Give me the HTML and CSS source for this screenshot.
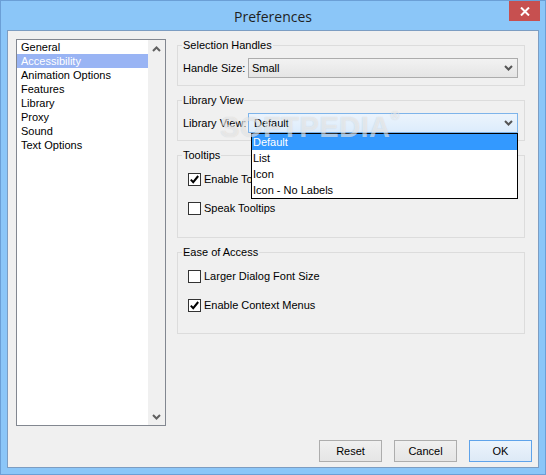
FILE: index.html
```html
<!DOCTYPE html>
<html>
<head>
<meta charset="utf-8">
<title>Preferences</title>
<link rel="stylesheet" href="styles.css">
</head>
<body>
<div class="window">
  <div class="titlebar">
    <span class="title">Preferences</span>
    <div class="close">
      <svg width="10" height="9" viewBox="0 0 10 9"><path d="M1 0.5 L9 8.5 M9 0.5 L1 8.5" stroke="#fff" stroke-width="2" fill="none"/></svg>
    </div>
  </div>
  <div class="client">
    <div class="main">
      <div class="listbox">
        <ul class="items">
          <li>General</li>
          <li class="sel">Accessibility</li>
          <li>Animation Options</li>
          <li>Features</li>
          <li>Library</li>
          <li>Proxy</li>
          <li>Sound</li>
          <li>Text Options</li>
        </ul>
        <div class="vscroll">
          <div class="sbtn">
            <svg width="9" height="6" viewBox="0 0 9 6"><path d="M1 5 L4.5 1.5 L8 5" stroke="#606060" stroke-width="2" fill="none"/></svg>
          </div>
          <div class="sbtn">
            <svg width="9" height="6" viewBox="0 0 9 6"><path d="M1 1 L4.5 4.5 L8 1" stroke="#606060" stroke-width="2" fill="none"/></svg>
          </div>
        </div>
      </div>
      <div class="panel">
        <fieldset class="group g1">
          <legend>Selection Handles</legend>
          <div class="field">
            <span class="lbl">Handle Size:</span>
            <div class="combo">
              <span>Small</span>
              <svg class="chev" width="9" height="6" viewBox="0 0 9 6"><path d="M1 1 L4.5 4.5 L8 1" stroke="#555" stroke-width="2" fill="none"/></svg>
            </div>
          </div>
        </fieldset>
        <fieldset class="group g2">
          <legend>Library View</legend>
          <div class="field">
            <span class="lbl">Library View:</span>
            <div class="combo focus">
              <span class="val">Default</span>
              <svg class="chev" width="9" height="6" viewBox="0 0 9 6"><path d="M1 1 L4.5 4.5 L8 1" stroke="#555" stroke-width="2" fill="none"/></svg>
              <ul class="dropdown">
                <li class="hl">Default</li>
                <li>List</li>
                <li>Icon</li>
                <li>Icon - No Labels</li>
              </ul>
            </div>
          </div>
        </fieldset>
        <fieldset class="group g3">
          <legend>Tooltips</legend>
          <div class="checks">
            <div class="check">
              <span class="box on"><svg width="11" height="11" viewBox="0 0 11 11"><path d="M1.8 5.6 L4.2 8.2 L9.2 2" stroke="#000" stroke-width="2" fill="none"/></svg></span>
              <span>Enable Tooltips</span>
            </div>
            <div class="check">
              <span class="box"></span>
              <span>Speak Tooltips</span>
            </div>
          </div>
        </fieldset>
        <fieldset class="group g4">
          <legend>Ease of Access</legend>
          <div class="checks">
            <div class="check">
              <span class="box"></span>
              <span>Larger Dialog Font Size</span>
            </div>
            <div class="check">
              <span class="box on"><svg width="11" height="11" viewBox="0 0 11 11"><path d="M1.8 5.6 L4.2 8.2 L9.2 2" stroke="#000" stroke-width="2" fill="none"/></svg></span>
              <span>Enable Context Menus</span>
            </div>
          </div>
        </fieldset>
      </div>
    </div>
    <div class="buttons">
      <div class="btn">Reset</div>
      <div class="btn">Cancel</div>
      <div class="btn default">OK</div>
    </div>
    <div class="watermark">SOFTPEDIA<sup>®</sup></div>
  </div>
</div>
</body>
</html>
```
FILE: styles.css
```css
* { box-sizing: border-box; }
html, body { margin: 0; padding: 0; }
body {
  width: 546px;
  height: 475px;
  overflow: hidden;
  font-family: "Liberation Sans", Arial, sans-serif;
  font-size: 11px;
  color: #000;
}
.window {
  width: 546px;
  height: 475px;
  background: #8bc6f8;
  border: 1px solid #6b9fd6;
  display: flex;
  flex-direction: column;
}
.titlebar {
  height: 29px;
  flex: none;
  display: flex;
  align-items: center;
  justify-content: center;
  position: relative;
}
.title {
  font-family: "Open Sans", "Noto Sans", sans-serif;
  font-size: 14px;
  color: #1f1f1f;
  margin-top: 2px;
}
.close {
  position: absolute;
  top: 0;
  right: 5px;
  width: 31px;
  height: 20px;
  background: #c75050;
  display: flex;
  align-items: center;
  justify-content: center;
}
.client {
  flex: 1;
  margin: 0 6px 6px 6px;
  background: #f0f0f0;
  border: 1px solid #7c9dc2;
  padding: 8px 6px 5px 8px;
  display: flex;
  flex-direction: column;
  gap: 14px;
  position: relative;
}
.main {
  display: flex;
  gap: 11px;
  height: 387px;
  flex: none;
}
.listbox {
  width: 150px;
  height: 387px;
  border: 1px solid #828790;
  background: #fff;
  display: flex;
}
.items {
  list-style: none;
  margin: 0;
  padding: 0;
  flex: 1;
}
.items li {
  height: 14px;
  line-height: 14px;
  padding-left: 4px;
  white-space: nowrap;
}
.items li.sel {
  background: #99b4f4;
  color: #fff;
}
.vscroll {
  width: 17px;
  background: #f0f0f0;
  display: flex;
  flex-direction: column;
  justify-content: space-between;
}
.sbtn {
  height: 17px;
  display: flex;
  align-items: center;
  justify-content: center;
}
.panel {
  width: 348px;
  display: flex;
  flex-direction: column;
  gap: 8px;
}
.group {
  margin: 0;
  min-width: 0;
  border: 1px solid #dcdcdc;
  padding: 6px 6px 7px 5px;
}
.group legend {
  padding: 0 1px;
  margin-left: -1px;
  line-height: 13px;
  height: 13px;
}
.field {
  display: flex;
  align-items: center;
}
.lbl {
  width: 65px;
  flex: none;
}
.combo {
  flex: 1;
  height: 20px;
  border: 1px solid #acacac;
  background: linear-gradient(#f2f2f2, #e5e5e5);
  display: flex;
  align-items: center;
  padding-left: 3px;
  padding-right: 4px;
  position: relative;
}
.combo span { flex: 1; }
.combo.focus {
  border-color: #7eb4ea;
  background: linear-gradient(#ecf4fc, #dcecfc);
  padding-left: 5px;
}
.dropdown {
  position: absolute;
  top: 19px;
  left: 2px;
  right: -1px;
  margin: 0;
  padding: 0;
  list-style: none;
  background: #fff;
  border: 1px solid #000;
  z-index: 2;
}
.dropdown li {
  height: 16px;
  line-height: 16px;
  padding-left: 1px;
}
.dropdown li.hl {
  background: #3399ff;
  color: #fff;
}
.g3, .g4 { padding-top: 11px; }
.g3 { padding-bottom: 22px; }
.g4 { padding-bottom: 21px; }
.checks {
  display: flex;
  flex-direction: column;
  gap: 16px;
  padding-left: 5px;
}
.check {
  display: flex;
  align-items: center;
  gap: 3px;
  height: 13px;
  line-height: 13px;
}
.box {
  width: 13px;
  height: 13px;
  border: 1px solid #333;
  background: #fff;
  display: flex;
  align-items: center;
  justify-content: center;
  flex: none;
}
.buttons {
  height: 22px;
  display: flex;
  justify-content: flex-end;
  gap: 12px;
}
.btn {
  width: 63px;
  height: 22px;
  border: 1px solid #adadad;
  background: linear-gradient(#f0f0f0, #e5e5e5);
  display: flex;
  align-items: center;
  justify-content: center;
}
.btn.default {
  border-color: #5fa3ea;
  background: linear-gradient(#ecf4fc, #dde9f6);
}
.watermark {
  position: absolute;
  left: 212px;
  top: 80px;
  font-family: "Liberation Sans", Arial, sans-serif;
  font-weight: bold;
  font-size: 29px;
  letter-spacing: 0.5px;
  color: rgba(255, 255, 255, 0.55);
  text-shadow: 0 0 1px rgba(90, 90, 90, 0.25);
  pointer-events: none;
  z-index: 3;
}
.watermark sup {
  font-size: 12px;
  vertical-align: top;
  position: relative;
  top: -2px;
}
```
